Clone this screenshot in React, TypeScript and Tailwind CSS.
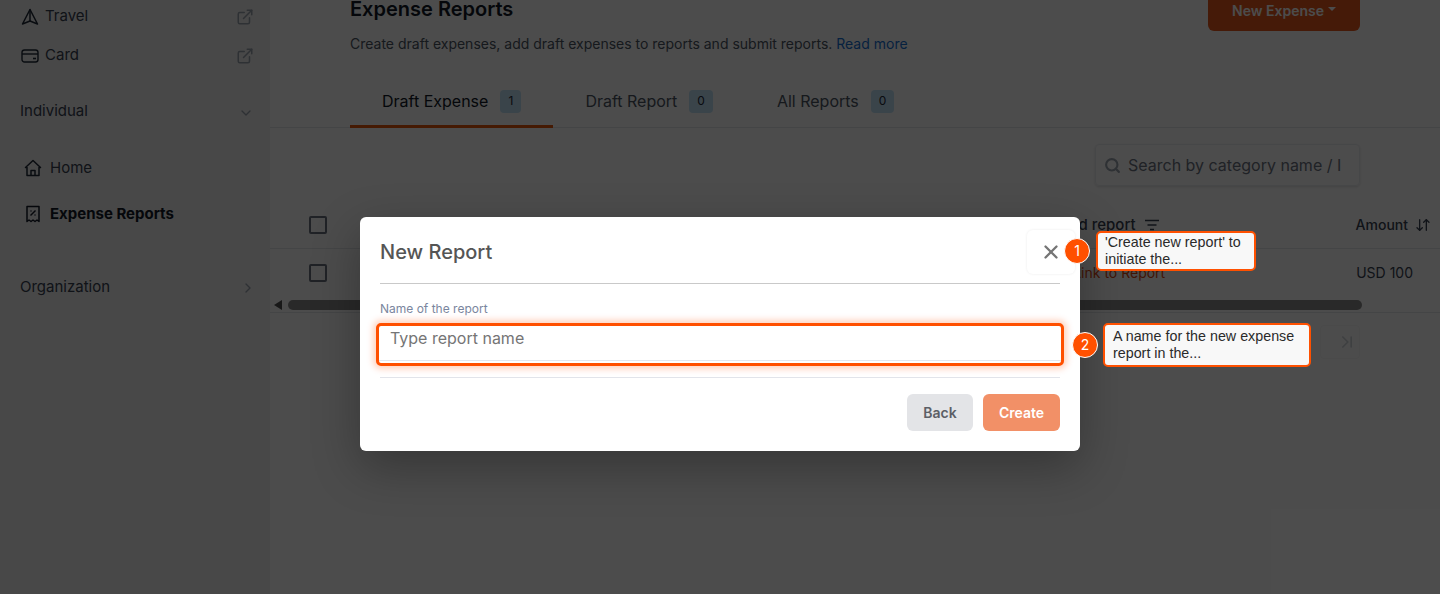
import { ExternalLink, ChevronDown, ChevronRight, Search, X, ArrowDownUp, ChevronLast } from "lucide-react";

const font = { fontFamily: "Inter, sans-serif" };

function TravelIcon() {
  return (
    <svg width="18" height="18" viewBox="0 0 18 18" fill="none" stroke="#1f2937" strokeWidth="1.5" strokeLinejoin="round">
      <path d="M9 1.5 L16.5 16 L9 13 L1.5 16 Z" />
      <path d="M9 1.5 V13" />
    </svg>
  );
}

function CardIcon() {
  return (
    <svg width="18" height="18" viewBox="0 0 18 18" fill="none" stroke="#1f2937" strokeWidth="1.4">
      <rect x="1" y="3" width="16" height="12" rx="2.5" />
      <path d="M1 7 H17" />
      <path d="M12 11.5 H15" strokeWidth="1.6" />
    </svg>
  );
}

function HomeIcon() {
  return (
    <svg width="18" height="18" viewBox="0 0 18 18" fill="none" stroke="#1f2937" strokeWidth="1.5" strokeLinejoin="round">
      <path d="M1.5 8.5 L9 1.5 L16.5 8.5 H15 V16.5 H3 V8.5 Z" />
      <path d="M7 16.5 V11.5 H11 V16.5" />
    </svg>
  );
}

function ReceiptIcon() {
  return (
    <svg width="18" height="18" viewBox="0 0 18 18" fill="none" stroke="#111827" strokeWidth="1.5" strokeLinejoin="round">
      <path d="M3 1.5 H15 V16.5 L13 15 L11 16.5 L9 15 L7 16.5 L5 15 L3 16.5 Z" />
      <path d="M6.5 10.5 L11.5 5.5" />
      <path d="M6.5 6 H7.5 M10.5 10 H11.5" />
    </svg>
  );
}

function FilterLines() {
  return (
    <svg width="16" height="12" viewBox="0 0 16 12" fill="none" stroke="#374151" strokeWidth="1.4">
      <path d="M1 1.5 H15 M3.5 6 H12.5 M6 10.5 H10" />
    </svg>
  );
}

function Checkbox() {
  return <div className="h-[18px] w-[18px] rounded-[2px] border-2 border-[#6b7280] bg-white" />;
}

function Tab({ label, count, active }: { label: string; count: number; active?: boolean }) {
  return (
    <div className={`-mb-px flex h-[56px] items-center gap-3 border-b-[3px] px-8 pt-[5px] ${active ? "border-[#e8590c]" : "border-transparent"}`}>
      <span className={`text-base ${active ? "text-[#111827]" : "text-[#4b5563]"}`}>{label}</span>
      <span className="flex h-[23px] min-w-[21px] items-center justify-center rounded-[4px] bg-[#c3e3f7] px-2 text-xs text-[#1f2937]">{count}</span>
    </div>
  );
}

function Tooltip({ num, className, children }: { num: number; className: string; children: React.ReactNode }) {
  return (
    <div className={`absolute flex items-center ${className}`}>
      <div className="flex h-[26px] w-[26px] items-center justify-center rounded-full border border-white bg-[#ff5000] text-sm text-white" style={font}>
        {num}
      </div>
      <div className="rounded-[5px] border-2 border-[#ff5000] bg-[#f8f8f8] px-[7px] text-[14.3px] leading-[17px] text-[#2a2a2a]" style={{ fontFamily: "'Liberation Sans', sans-serif" }}>
        {children}
      </div>
    </div>
  );
}

export default function App() {
  return (
    <div className="relative h-[594px] w-[1440px] overflow-hidden bg-white" style={font}>
      <div className="flex h-full">
        <aside className="h-full w-[270px] shrink-0 bg-[#f1f1f1] pr-4 pl-5 text-[15px] text-[#1f2937]">
          <div className="flex h-[39px] -translate-y-[3px] items-center gap-[6px] pl-[1px]">
            <TravelIcon />
            <span className="text-[#374151]">Travel</span>
            <ExternalLink className="ml-auto h-[18px] w-[18px] text-[#9ca3af]" />
          </div>
          <div className="flex h-[39px] -translate-y-[3px] items-center gap-[6px] pl-[1px]">
            <CardIcon />
            <span className="text-[#374151]">Card</span>
            <ExternalLink className="ml-auto h-[18px] w-[18px] text-[#9ca3af]" />
          </div>
          <div className="mt-[23px] flex h-[20px] items-center justify-between text-[#374151]">
            <span>Individual</span>
            <ChevronDown className="mt-[3px] h-4 w-4 text-[#9ca3af]" />
          </div>
          <div className="mt-[37px] flex h-[20px] items-center gap-2 pl-[4px] text-[#374151]">
            <HomeIcon />
            <span>Home</span>
          </div>
          <div className="mt-[26px] flex h-[20px] items-center gap-2 pl-[4px] font-bold text-[#111827]">
            <ReceiptIcon />
            <span>Expense Reports</span>
          </div>
          <div className="mt-[53px] flex h-[20px] items-center justify-between text-[#374151]">
            <span>Organization</span>
            <ChevronRight className="mt-[2px] -mr-[2px] h-4 w-4 text-[#9ca3af]" />
          </div>
        </aside>

        <main className="min-w-0 flex-1 bg-white">
          <div className="flex h-[40px] justify-between px-20">
            <h1 className="-mt-[3px] text-xl leading-[24px] font-semibold text-[#111827]">Expense Reports</h1>
            <button className="-mt-[10px] flex h-[41px] w-[152px] items-center justify-center gap-1 rounded-[6px] bg-[#e8591c] text-sm font-semibold text-white">
              New Expense
              <span className="mb-[3px] h-0 w-0 border-x-4 border-t-4 border-x-transparent border-t-white" />
            </button>
          </div>
          <p className="-mt-[5px] pl-20 text-sm leading-[18px] text-[#4b5563]">
            Create draft expenses, add draft expenses to reports and submit reports.{" "}
            <span className="text-[#1570d4]">Read more</span>
          </p>
          <div className="mt-[19px] flex border-b border-[#e5e7eb] pl-20">
            <Tab label="Draft Expense" count={1} active />
            <Tab label="Draft Report" count={0} />
            <Tab label="All Reports" count={0} />
          </div>

          <div className="mt-4 flex justify-end pr-20">
            <div className="flex h-[42px] w-[265px] items-center gap-[7px] overflow-hidden rounded-[4px] border border-[#eceef1] pl-2 shadow-sm">
              <Search className="h-[17px] w-[17px] shrink-0 text-[#9ca3af]" strokeWidth={3} />
              <span className="text-base whitespace-nowrap text-[#6b7280]">Search by category name / I</span>
            </div>
          </div>

          <div className="mt-4 flex h-[47px] items-center border-b border-[#e5e7eb] pr-[9px] pl-[39px] text-sm">
            <Checkbox />
            <div className="ml-auto flex items-center gap-2 font-medium text-[#374151]">
              <span className="text-[15px]">Linked report</span>
              <FilterLines />
            </div>
            <div className="ml-[196px] flex items-center gap-[7px] font-medium text-[#374151]">
              <span>Amount</span>
              <ArrowDownUp className="h-4 w-4" />
            </div>
          </div>
          <div className="flex h-[48px] items-center pr-[27px] pl-[39px] text-sm">
            <Checkbox />
            <span className="ml-auto text-[#d9480f]">Link to Report</span>
            <span className="ml-[191px] text-[#374151]">USD 100</span>
          </div>
          <div className="flex h-[16px] items-center border-b border-[#e5e7eb] pl-[4px]">
            <span className="h-0 w-0 border-y-[5px] border-r-[8px] border-y-transparent border-r-[#505050]" />
            <div className="ml-[6px] h-[10px] w-[1074px] rounded-full bg-[#8a8a8a]" />
          </div>
          <div className="flex h-[58px] items-center justify-end pr-20">
            <div className="flex h-[34px] w-[40px] items-center justify-center rounded-[4px] border border-[#f7f7f8] pl-[14px]">
              <ChevronLast className="h-5 w-5 shrink-0 text-[#d1d5db]" />
            </div>
          </div>
        </main>
      </div>

      <div className="absolute inset-0 bg-black/70" />

      <div className="absolute top-[217px] left-[360px] w-[720px] rounded-[6px] bg-white px-5 shadow-[0_16px_48px_rgba(0,0,0,0.3)]">
        <div className="flex h-[67px] items-center justify-between border-b border-[#c9c9c9] pt-[4px]">
          <h2 className="text-xl font-medium text-[#555555]">New Report</h2>
          <div className="-mr-[15px] flex h-[44px] w-[48px] items-center justify-center rounded-[6px] shadow-[0_0_3px_rgba(0,0,0,0.08)]">
            <X className="h-[22px] w-[22px] text-[#757575]" strokeWidth={2.5} />
          </div>
        </div>
        <label className="mt-[17px] block text-xs leading-[15px] text-[#7a869e]">Name of the report</label>
        <div className="-mx-[4px] mt-[7px] h-[43px] rounded-[5px] border-[3px] border-[#ff5000] bg-white shadow-[0_0_6px_3px_rgba(255,80,0,0.25)]">
          <div className="flex h-[35px] items-center border-b border-[#e2e8f0] px-[11px] pb-[10px] text-base text-[#757575]">
            Type report name
          </div>
        </div>
        <div className="mt-[11px] flex h-[74px] items-start justify-end gap-[10px] border-t border-[#e2e4ea] pt-[16px]">
          <button className="h-[37px] w-[66px] rounded-[6px] bg-[#e3e4e7] pt-px text-sm font-semibold text-[#5c5f66]">Back</button>
          <button className="h-[37px] w-[77px] rounded-[6px] bg-[#f29067] pt-px text-sm font-semibold text-white">Create</button>
        </div>
      </div>

      <Tooltip num={1} className="top-[231px] left-[1064px] gap-[6px]">
        <div className="w-[142px] py-[1px]">'Create new report' to initiate the...</div>
      </Tooltip>
      <Tooltip num={2} className="top-[323px] left-[1072px] gap-[5px]">
        <div className="w-[190px] py-[3px] pl-px">A name for the new expense report in the...</div>
      </Tooltip>
    </div>
  );
}
